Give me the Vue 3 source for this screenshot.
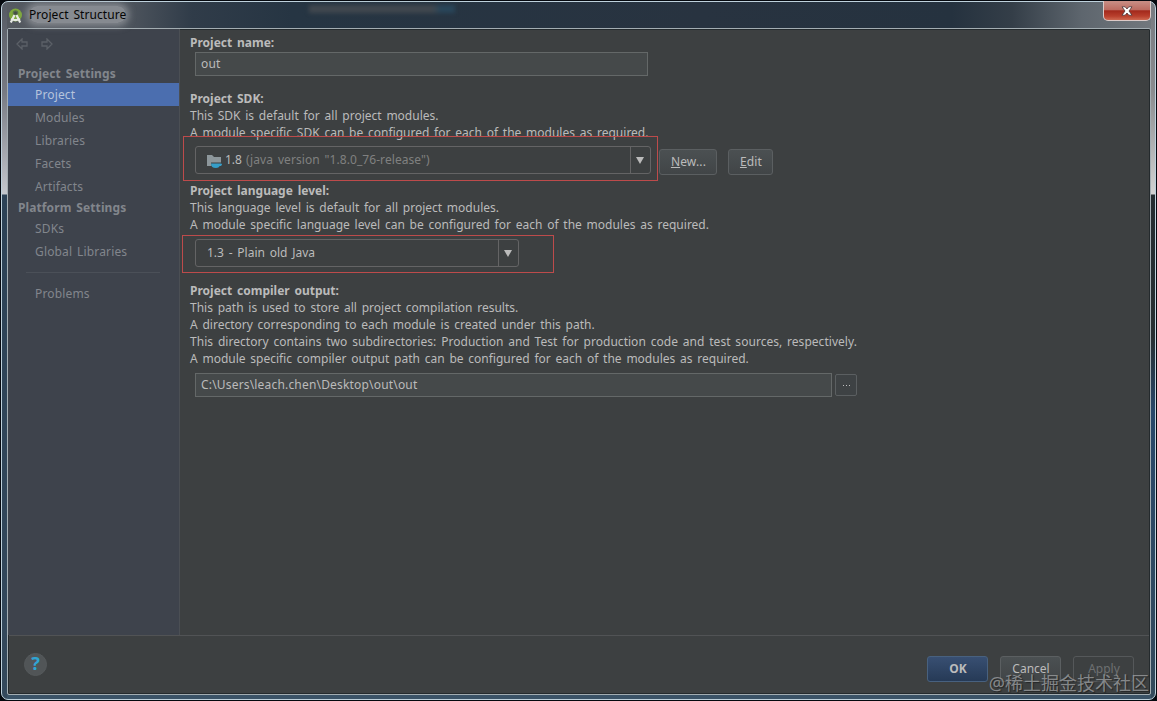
<template>
  <div class="desktop">
    <div class="window">
      <header class="titlebar">
        <svg class="app-icon" width="16" height="16" viewBox="0 0 16 16">
          <circle cx="7.5" cy="7" r="6.5" fill="#7ea83c" />
          <circle cx="7.5" cy="5" r="2.8" fill="#587247" />
          <path d="M6.500 7 2.800 14.500M8.500 7l3.700 7.500M3 11c2.600 1.200 6.400 1.200 9 0" fill="none" stroke="#e8ebe6" stroke-width="2.200" />
          <circle cx="7.5" cy="5" r="1.500" fill="#454d48" />
        </svg>
        <h1 class="title"><span>Project Structure</span></h1>
        <span class="ghost"></span>
        <button class="close" aria-label="Close">
          <svg width="12" height="10" viewBox="0 0 12 10">
            <path d="M1 .8h3.200L6 3 7.800.8H11L8 5l3 4.200H7.800L6 7 4.200 9.200H1L4 5z" fill="#fff" stroke="#4a3436" stroke-width=".8" />
          </svg>
        </button>
      </header>

      <div class="client">
        <div class="main">
          <nav class="sidebar">
            <div class="history">
              <svg width="12" height="12" viewBox="0 0 12 12"><path d="M6 1 1 6l5 5V8h5V4H6z" /></svg>
              <svg width="12" height="12" viewBox="0 0 12 12"><path d="m6 1 5 5-5 5V8H1V4h5z" /></svg>
            </div>
            <section v-for="group in groups" :key="group.name">
              <h2>{{ group.name }}</h2>
              <ul>
                <li v-for="item in group.items" :key="item" :class="{ active: item === selected }" @click="selected = item">
                  {{ item }}
                </li>
              </ul>
            </section>
            <hr />
            <ul>
              <li :class="{ active: selected === 'Problems' }" @click="selected = 'Problems'">Problems</li>
            </ul>
          </nav>

          <div class="content">
            <section class="name">
              <h3>Project name:</h3>
              <div class="field name-field">out</div>
            </section>

            <section class="sdk">
              <h3>Project SDK:</h3>
              <p>This SDK is default for all project modules.</p>
              <p>A module specific SDK can be configured for each of the modules as required.</p>
              <div class="row">
                <div class="combo sdk-combo">
                  <div class="value">
                    <svg width="16" height="15" viewBox="0 0 16 15">
                      <path d="M0 1h5l2 2h7v9H0z" fill="#8d979b" />
                      <path d="M4 8.500h11v2.500h-1.800c-.5 2-1.600 3-4.200 3-3.200 0-5-1.500-5-5.500z" fill="#3c3f41" />
                      <path d="M4 9.500h9.500c2.200 0 2 2.500-.8 2.500-.8 1.300-1.600 2-3.700 2-3.400 0-5-1.500-5-4.500z" fill="#369fc9" />
                    </svg>
                    <span class="version">1.8</span>
                    <span class="detail">(java version "1.8.0_76-release")</span>
                  </div>
                  <div class="arrow"><i></i></div>
                </div>
                <button class="btn new"><u>N</u>ew...</button>
                <button class="btn edit"><u>E</u>dit</button>
              </div>
              <div class="mark mark-sdk"></div>
            </section>

            <section class="level">
              <h3>Project language level:</h3>
              <p>This language level is default for all project modules.</p>
              <p>A module specific language level can be configured for each of the modules as required.</p>
              <div class="combo level-combo">
                <div class="value">1.3 - Plain old Java</div>
                <div class="arrow"><i></i></div>
              </div>
              <div class="mark mark-level"></div>
            </section>

            <section class="output">
              <h3>Project compiler output:</h3>
              <p>This path is used to store all project compilation results.</p>
              <p>A directory corresponding to each module is created under this path.</p>
              <p class="long">This directory contains two subdirectories: Production and Test for production code and test sources, respectively.</p>
              <p>A module specific compiler output path can be configured for each of the modules as required.</p>
              <div class="path-row">
                <div class="field path-field">C:\Users\leach.chen\Desktop\out\out</div>
                <button class="browse" aria-label="Browse"><i></i><i></i><i></i></button>
              </div>
            </section>
          </div>
        </div>

        <footer class="footer">
          <button class="help">?</button>
          <div class="actions">
            <button class="btn primary">OK</button>
            <button class="btn">Cancel</button>
            <button class="btn disabled">Apply</button>
          </div>
        </footer>
      </div>
    </div>
    <div class="watermark">@稀土掘金技术社区</div>
  </div>
</template>

<script setup>
import { ref } from 'vue';

const selected = ref('Project');

const groups = [
  { name: 'Project Settings', items: ['Project', 'Modules', 'Libraries', 'Facets', 'Artifacts'] },
  { name: 'Platform Settings', items: ['SDKs', 'Global Libraries'] },
];
</script>

<style>
body {
  background: #05090f;
  overflow: hidden;
}
</style>

<style scoped>
* {
  box-sizing: border-box;
}

.desktop {
  position: relative;
  width: 1157px;
  height: 701px;
  padding: 1px;
  font-family: "Noto Sans", "Noto Sans CJK SC", sans-serif;
  font-size: 12px;
  word-spacing: 1.65px;
  color: #bbbbbb;
  background: #05090f;
}

h1, h2, h3, p, ul {
  margin: 0;
  padding: 0;
  font-size: 12px;
  list-style: none;
  white-space: nowrap;
}

button {
  padding: 0;
  font: inherit;
  color: inherit;
}

.window {
  display: flex;
  flex-direction: column;
  width: 1155px;
  height: 699px;
  padding: 0 4px 4px 5px;
  border: 1px solid #bed1dc;
  border-radius: 7px;
  background:
    linear-gradient(to bottom, #555a63 0, #777a83 90px, #c4c7cd 192px, #2c4256 193px, #34495c 100%) left / 5px 100% no-repeat,
    linear-gradient(to bottom, #777a80 0, #8a8c8f 90px, #d2d3d3 192px, #252d31 193px, #272e32 335px, #284769 410px, #344a5b 100%) right / 4px 100% no-repeat,
    linear-gradient(#3b5367, #3b5367) bottom / 100% 5px no-repeat,
    linear-gradient(to right, #555a61 0, #4c535c 130px, #303c49 190px, #263543 290px, #283340 700px, #25323f 950px, #343e48 1010px, #5e666e 1080px, #73797e 100%);
}

.titlebar {
  position: relative;
  display: flex;
  align-items: flex-start;
  flex: 0 0 26px;
}

.app-icon {
  margin: 6px 0 0 1px;
}

.title {
  margin: 4px 0 0 5px;
  font-weight: 400;
  line-height: 17px;
  color: #050505;
}

.title span {
  letter-spacing: 0.06px;
  background: rgba(165, 168, 172, 0.65);
  border-radius: 9px;
  box-shadow: 0 0 7px 3px rgba(165, 168, 172, 0.65);
}

/* blurred caption of the window behind the glass */
.ghost {
  position: absolute;
  left: 302px;
  top: 3px;
  width: 146px;
  height: 8px;
  background: linear-gradient(to right, #41484f 85%, #29465a 90%);
  filter: blur(2px);
}

.close {
  display: flex;
  align-items: center;
  justify-content: center;
  width: 48px;
  height: 20px;
  margin: -1px 0 0 auto;
  border: 1px solid #dccac7;
  border-top: 0;
  border-radius: 0 0 5px 5px;
  background: linear-gradient(to bottom, #c98f86 0, #bd6d62 45%, #a3291c 52%, #b9402d 80%, #ce6851 100%);
}

.client {
  display: flex;
  flex: 1;
  flex-direction: column;
  border: 1px solid #a3adb2;
  border-radius: 2px;
  background: #3d4041;
  box-shadow: inset 0 0 0 1px #242a2d;
}

.main {
  display: flex;
  flex: 0 0 606px;
}

.sidebar {
  width: 172px;
  padding-top: 9px;
  color: #82868c;
  background: #3e434c;
  border-right: 1px solid #4b4f54;
}

.history {
  display: flex;
  gap: 13px;
  height: 26px;
  padding-left: 8px;
}

.history path {
  fill: none;
  stroke: #5b6067;
  stroke-width: 1.3;
}

.sidebar h2 {
  height: 19px;
  padding-left: 10px;
  line-height: 20px;
  font-weight: 700;
  letter-spacing: 0.1px;
}

.sidebar li {
  height: 23px;
  padding-left: 27px;
  line-height: 23px;
  letter-spacing: 0.15px;
}

.sidebar li.active {
  color: #b6c4dc;
  background: #4b6eaf;
}

.sidebar hr {
  height: 1px;
  margin: 9px 19px 9px 18px;
  border: 0;
  background: #4b5058;
}

.content {
  flex: 1;
  padding: 5px 0 0 10px;
}

.content section {
  position: relative;
}

.content h3,
.content p {
  height: 17px;
  line-height: 17px;
}

.content .long {
  letter-spacing: 0.035px;
}

.name { height: 56px; }
.sdk { height: 92px; }
.level { height: 100px; }

.field {
  height: 24px;
  padding-left: 5px;
  line-height: 22px;
  letter-spacing: 0.18px;
  color: #bbbbbb;
  background: #45494a;
  border: 1px solid #646868;
}

.name-field {
  width: 453px;
  margin: 1px 0 0 5px;
}

.row {
  display: flex;
  margin: 5px 0 0 5px;
}

.combo {
  display: flex;
  height: 28px;
  border: 1px solid #646465;
  border-radius: 3px;
}

.sdk-combo {
  width: 456px;
}

.level-combo {
  width: 324px;
  margin: 6px 0 0 5px;
}

.combo .value {
  display: flex;
  flex: 1;
  align-items: center;
  padding: 0 0 2px 11px;
}

.value svg {
  margin: 4px 2px 0 0;
}

.detail {
  margin-left: 4px;
  letter-spacing: 0.07px;
  color: #808080;
}

.arrow {
  display: flex;
  align-items: center;
  width: 20px;
  padding-left: 5px;
  border-left: 1px solid #646465;
}

.arrow i {
  border: 4px solid transparent;
  border-top: 7px solid #bbbbbb;
  border-bottom: 0;
}

.btn {
  width: 61px;
  height: 26px;
  padding: 0 0 1px 1px;
  border: 1px solid #5b5f61;
  border-radius: 3px;
  background: linear-gradient(#4b5052, #414547);
}

.new {
  width: 58px;
  margin: 3px 0 0 8px;
  letter-spacing: 0.15px;
}

.edit {
  width: 45px;
  margin: 3px 0 0 11px;
  letter-spacing: 0.15px;
}

/* red frames drawn around the two combo boxes */
.mark {
  position: absolute;
  border: 1px solid #bd4b4b;
}

.mark-sdk {
  left: -7px;
  top: 46px;
  width: 475px;
  height: 45px;
}

.mark-level {
  left: -8px;
  top: 53px;
  width: 372px;
  height: 38px;
}

.path-row {
  display: flex;
  align-items: center;
  gap: 3px;
  margin: 6px 0 0 5px;
}

.path-field {
  width: 637px;
}

.browse {
  display: flex;
  align-items: center;
  justify-content: center;
  gap: 2px;
  width: 22px;
  height: 22px;
  border: 1px solid #5b5f61;
  border-radius: 2px;
  background: #3e4244;
}

.browse i {
  width: 1px;
  height: 1px;
  background: #c0c0c0;
}

.footer {
  display: flex;
  flex: 1;
  justify-content: space-between;
  margin: 0 1px;
  padding: 17px 15px 0 15px;
  border-top: 1px solid #515355;
}

.help {
  width: 23px;
  height: 23px;
  padding-bottom: 2px;
  border: 1px solid #55595b;
  border-radius: 50%;
  background: #515557;
  color: #2fa5d3;
  font-size: 18px;
  font-weight: 700;
  line-height: 19px;
}

.actions {
  display: flex;
  gap: 12px;
  padding-top: 3px;
}

.primary {
  border-color: #48617f;
  background: linear-gradient(#384f72, #263a56);
  font-weight: 700;
}

.disabled {
  color: #6e7071;
  border-color: #55585a;
  background: none;
}

.watermark {
  position: absolute;
  right: 8px;
  top: 670px;
  font-size: 18px;
  line-height: 26px;
  white-space: nowrap;
  color: rgba(170, 172, 174, 0.7);
  text-shadow: 1px 1px 1px rgba(20, 20, 20, 0.6);
}
</style>
